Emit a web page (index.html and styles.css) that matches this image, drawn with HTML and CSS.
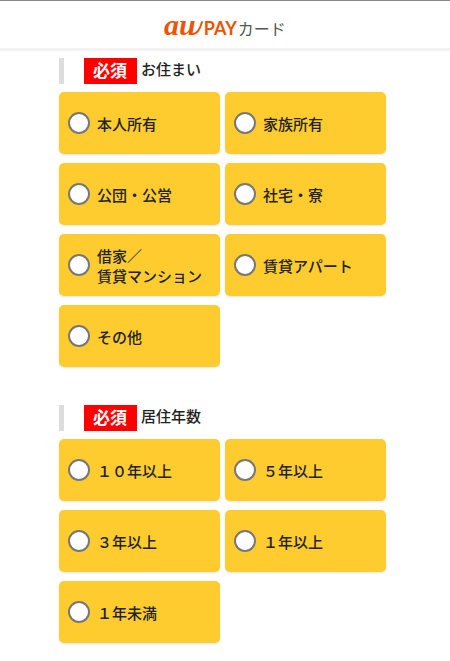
FILE: index.html
```
<!DOCTYPE html>
<html lang="ja">
<head>
    <meta charset="UTF-8">
    <meta name="viewport" content="width=device-width, initial-scale=1.0">
    <title>au PAY カード</title>
    <link rel="stylesheet" href="styles.css">
</head>
<body>
    <header class="site-header">
        <h1 class="logo">
            <span class="logo-au">au</span>
            <svg class="logo-tail" width="8" height="14" viewBox="0 0 8 14" aria-hidden="true">
                <path d="M-3 13 C1 13 4 8 6 1" />
            </svg>
            <span class="logo-pay">PAY</span>
            <span class="logo-card">カード</span>
        </h1>
    </header>

    <form class="container">
        <fieldset class="question">
            <legend class="question-title"><span class="required">必須</span>お住まい</legend>
            <div class="options">
                <label class="option"><input type="radio" name="housing" value="1"><span>本人所有</span></label>
                <label class="option"><input type="radio" name="housing" value="2"><span>家族所有</span></label>
                <label class="option"><input type="radio" name="housing" value="3"><span>公団・公営</span></label>
                <label class="option"><input type="radio" name="housing" value="4"><span>社宅・寮</span></label>
                <label class="option"><input type="radio" name="housing" value="5"><span>借家／<br>賃貸マンション</span></label>
                <label class="option"><input type="radio" name="housing" value="6"><span>賃貸アパート</span></label>
                <label class="option"><input type="radio" name="housing" value="7"><span>その他</span></label>
            </div>
        </fieldset>

        <fieldset class="question">
            <legend class="question-title"><span class="required">必須</span>居住年数</legend>
            <div class="options">
                <label class="option"><input type="radio" name="years" value="10"><span>１０年以上</span></label>
                <label class="option"><input type="radio" name="years" value="5"><span>５年以上</span></label>
                <label class="option"><input type="radio" name="years" value="3"><span>３年以上</span></label>
                <label class="option"><input type="radio" name="years" value="1"><span>１年以上</span></label>
                <label class="option"><input type="radio" name="years" value="0"><span>１年未満</span></label>
            </div>
        </fieldset>
    </form>
</body>
</html>
```
FILE: styles.css
```
* {
    box-sizing: border-box;
}
body {
    margin: 0;
    background: #fff;
    color: #222;
    font-family: "Noto Sans CJK JP", sans-serif;
    font-size: 15px;
    line-height: 20px;
}
.site-header {
    border-top: 1px solid #888;
    border-bottom: 3px solid #f3f3f3;
    padding: 12px 0 8px;
}
.logo {
    display: flex;
    justify-content: center;
    align-items: baseline;
    margin: 0;
    line-height: 24px;
    color: #eb5505;
}
.logo-au {
    font-family: "Liberation Serif", serif;
    font-size: 30px;
    font-style: italic;
    font-weight: bold;
}
.logo-tail {
    overflow: visible;
    fill: none;
    stroke: #eb5505;
    stroke-width: 2;
    stroke-linecap: round;
}
.logo-pay {
    font-family: Lato, sans-serif;
    font-size: 18px;
    font-weight: bold;
}
.logo-card {
    margin-left: 1px;
    color: #555;
    font-size: 16px;
    font-weight: 400;
}
.container {
    padding: 7px 64px 17px 59px;
}
.question {
    min-width: 0;
    margin: 0 0 38px;
    padding: 0;
    border: 0;
}
.question:last-child {
    margin-bottom: 0;
}
.question-title {
    display: flex;
    align-items: flex-start;
    gap: 4px;
    margin-bottom: 8px;
    padding: 0 0 0 20px;
    border-left: 5px solid #ddd;
    font-weight: 500;
    line-height: 22px;
}
.required {
    padding: 1px 10px 3px 9px;
    background: #f00;
    color: #fff;
    font-size: 17px;
    font-weight: 700;
}
.options {
    display: grid;
    grid-template-columns: 1fr 1fr;
    gap: 9px 5px;
}
.option {
    display: flex;
    align-items: center;
    gap: 7px;
    min-height: 62px;
    padding: 1px 9px 0;
    border-radius: 5px;
    background: #ffcc30;
    box-shadow: 0 1px 2px rgba(0, 0, 0, 0.1);
    font-weight: 500;
    cursor: pointer;
}
.option input {
    flex: none;
    appearance: none;
    width: 22px;
    height: 22px;
    margin: 0 0 2px;
    border: 2px solid #777;
    border-radius: 50%;
    background: #fff;
}
.option input:checked {
    background: #eb5505;
    box-shadow: inset 0 0 0 4px #fff;
}
```
